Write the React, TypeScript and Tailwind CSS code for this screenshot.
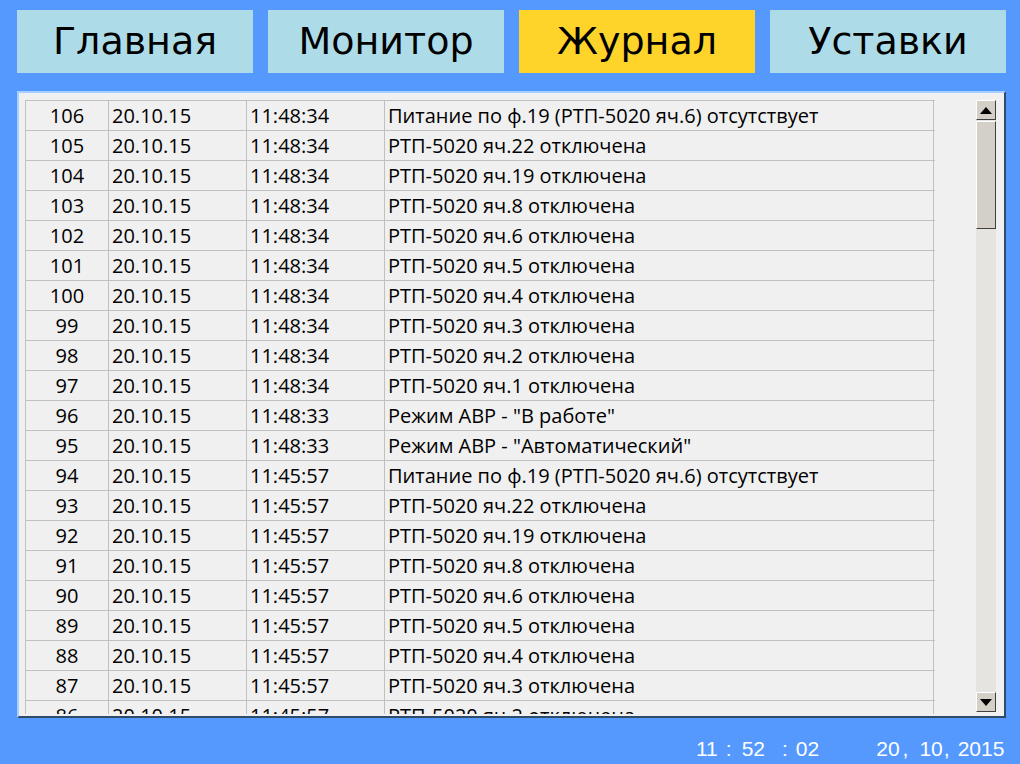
import React from "react";

type Row = [string, string, string, string];

const rows: Row[] = [
  ["106", "20.10.15", "11:48:34", "Питание по ф.19 (РТП-5020 яч.6) отсутствует"],
  ["105", "20.10.15", "11:48:34", "РТП-5020 яч.22 отключена"],
  ["104", "20.10.15", "11:48:34", "РТП-5020 яч.19 отключена"],
  ["103", "20.10.15", "11:48:34", "РТП-5020 яч.8 отключена"],
  ["102", "20.10.15", "11:48:34", "РТП-5020 яч.6 отключена"],
  ["101", "20.10.15", "11:48:34", "РТП-5020 яч.5 отключена"],
  ["100", "20.10.15", "11:48:34", "РТП-5020 яч.4 отключена"],
  ["99", "20.10.15", "11:48:34", "РТП-5020 яч.3 отключена"],
  ["98", "20.10.15", "11:48:34", "РТП-5020 яч.2 отключена"],
  ["97", "20.10.15", "11:48:34", "РТП-5020 яч.1 отключена"],
  ["96", "20.10.15", "11:48:33", "Режим АВР - \"В работе\""],
  ["95", "20.10.15", "11:48:33", "Режим АВР - \"Автоматический\""],
  ["94", "20.10.15", "11:45:57", "Питание по ф.19 (РТП-5020 яч.6) отсутствует"],
  ["93", "20.10.15", "11:45:57", "РТП-5020 яч.22 отключена"],
  ["92", "20.10.15", "11:45:57", "РТП-5020 яч.19 отключена"],
  ["91", "20.10.15", "11:45:57", "РТП-5020 яч.8 отключена"],
  ["90", "20.10.15", "11:45:57", "РТП-5020 яч.6 отключена"],
  ["89", "20.10.15", "11:45:57", "РТП-5020 яч.5 отключена"],
  ["88", "20.10.15", "11:45:57", "РТП-5020 яч.4 отключена"],
  ["87", "20.10.15", "11:45:57", "РТП-5020 яч.3 отключена"],
  ["86", "20.10.15", "11:45:57", "РТП-5020 яч.2 отключена"],
];

const tabs = [
  { label: "Главная", active: false },
  { label: "Монитор", active: false },
  { label: "Журнал", active: true },
  { label: "Уставки", active: false },
];

function ArrowButton({ up }: { up: boolean }) {
  return (
    <div className="h-[20px] w-[20px] bg-[#d4d0c8] border-t border-l border-t-white border-l-white border-b border-r border-b-[#404040] border-r-[#404040] flex items-center justify-center">
      <svg width="12" height="7" viewBox="0 0 12 7">
        {up ? <polygon points="6,0 12,7 0,7" fill="#000" /> : <polygon points="0,0 12,0 6,7" fill="#000" />}
      </svg>
    </div>
  );
}

export default function App() {
  return (
    <div className="w-[1020px] h-[764px] bg-[#5599ff] overflow-hidden flex flex-col">
      <div className="flex gap-[15px] pl-[17px] pt-[10px]">
        {tabs.map((t) => (
          <div
            key={t.label}
            className={`w-[236px] h-[63px] flex items-center justify-center text-[38px] text-black ${
              t.active ? "bg-[#ffd42a]" : "bg-[#addce8]"
            }`}
            style={{ fontFamily: '"DejaVu Sans", sans-serif' }}
          >
            <span className="leading-none -mt-[2px]">{t.label}</span>
          </div>
        ))}
      </div>

      <div className="ml-[17px] mt-[18px] w-[989px] h-[627px] bg-[#f0f0f0] border-t-2 border-l-2 border-t-[#a6d0ff] border-l-[#a6d0ff] border-b-2 border-r-2 border-b-[#2e4c6a] border-r-[#2e4c6a] flex">
        <div className="ml-[6px] mt-[7px] h-[614px] w-[910px] overflow-hidden">
          <div
            className="border-t border-[#c0c0c0] text-[20px] text-black"
            style={{ fontFamily: '"Open Sans", "Noto Sans", sans-serif' }}
          >
            {rows.map((r) => (
              <div key={r[0]} className="grid grid-cols-[83px_138px_138px_550px] h-[30px] border-b border-[#c0c0c0]">
                <div className="border-l border-[#c0c0c0] flex items-center justify-center leading-none">{r[0]}</div>
                <div className="border-l border-[#c0c0c0] flex items-center pl-[3px] leading-none">{r[1]}</div>
                <div className="border-l border-[#c0c0c0] flex items-center pl-[3px] leading-none">{r[2]}</div>
                <div className="border-l border-r border-[#c0c0c0] flex items-center pl-[3px] leading-none whitespace-nowrap">{r[3]}</div>
              </div>
            ))}
          </div>
        </div>

        <div className="ml-[41px] mt-[7px] w-[20px] h-[612px] bg-[#e6e4e0] flex flex-col">
          <ArrowButton up />
          <div className="mt-[1px] h-[108px] w-[20px] bg-[#d4d0c8] border-t border-l border-t-white border-l-white border-b border-r border-b-[#404040] border-r-[#404040]" />
          <div className="flex-1" />
          <ArrowButton up={false} />
        </div>
      </div>

      <div
        className="flex items-center text-white text-[21px] mt-[20px] h-[20px] leading-none"
        style={{ fontFamily: '"Liberation Sans", Arial, sans-serif' }}
      >
        <div className="ml-[696px] flex">
          <span>11</span>
          <span className="ml-[8px]">:</span>
          <span className="ml-[10px]">52</span>
          <span className="ml-[17px]">:</span>
          <span className="ml-[8px]">02</span>
        </div>
        <div className="ml-[57px] flex">
          <span>20</span>
          <span className="ml-[3px]">,</span>
          <span className="ml-[11px]">10</span>
          <span className="ml-[1px]">,</span>
          <span className="ml-[8px]">2015</span>
        </div>
      </div>
    </div>
  );
}
